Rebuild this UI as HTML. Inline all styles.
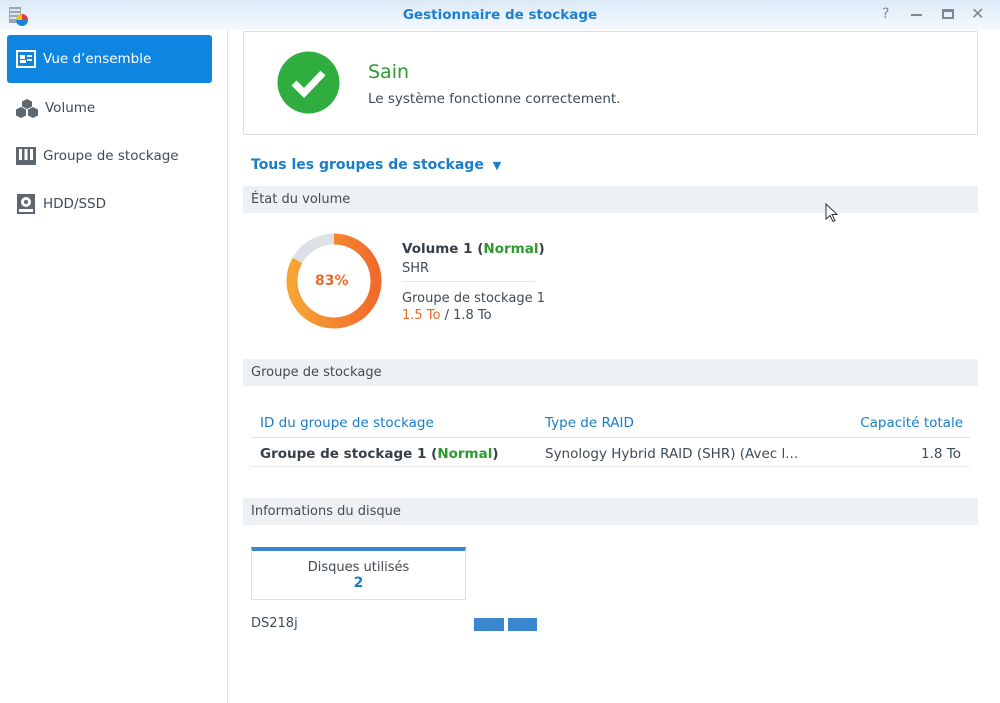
<!DOCTYPE html>
<html><head><meta charset="utf-8"><style>
*{margin:0;padding:0;box-sizing:border-box}
body{width:1000px;height:703px;background:#fff;font-family:"DejaVu Sans","Liberation Sans",sans-serif;font-size:13.5px;color:#414b55;position:relative;overflow:hidden}
.title{position:absolute;left:0;top:0;width:1000px;height:30px;background:linear-gradient(#dceaf7,#f5f9fd);}
.title .t{position:absolute;left:0;width:1000px;top:7px;text-align:center;color:#1f7fcf;font-weight:bold;font-size:13.5px}
.ctl{position:absolute;top:6px;color:#7b8894;font-size:14px}
.side{position:absolute;left:0;top:30px;width:228px;height:673px;border-right:1px solid #dde3e8}
.nav{position:absolute;left:7px;width:205px;height:48px;border-radius:3px;display:flex;align-items:center;padding-left:9px;font-size:13.5px;color:#414b55}
.nav.act{background:#0e86e1;color:#fff}
.nav svg{margin-right:7px}
.abs{position:absolute;white-space:nowrap}
.sec{position:absolute;left:243px;width:735px;height:27px;background:#eef1f4;padding:6px 8px;font-size:13px;color:#414b55}
</style></head><body>
<div class="title">
<svg class="abs" style="left:8px;top:5px" width="22" height="22" viewBox="0 0 22 22"><rect x="1" y="2" width="12" height="16" fill="#9aa7b8"/><rect x="2" y="4" width="10" height="2" fill="#dfe6ee"/><rect x="2" y="8" width="10" height="2" fill="#dfe6ee"/><rect x="2" y="12" width="10" height="2" fill="#dfe6ee"/><circle cx="14" cy="15" r="6" fill="#1e82d8"/><path d="M14 15 L14 9 A6 6 0 0 1 20 15 Z" fill="#e83d3d"/><path d="M14 15 L8 15 A6 6 0 0 1 14 9Z" fill="#f4c21d"/></svg>
<div class="t">Gestionnaire de stockage</div>
<div class="ctl" style="left:882px">?</div>
<div class="abs" style="left:911px;top:14px;width:11px;height:2px;background:#7b8894"></div>
<div class="abs" style="left:942px;top:9px;width:12px;height:10px;border:2px solid #7b8894;border-top-width:3px"></div>
<div class="ctl" style="left:971px;top:4px;font-size:16px">✕</div>
</div>
<div class="side">
<div class="nav act" style="top:5px"><svg width="20" height="18" viewBox="0 0 20 18"><rect x="1" y="1" width="18" height="16" fill="none" stroke="#fff" stroke-width="2"/><rect x="4" y="5" width="5" height="4" fill="#fff"/><rect x="4" y="10" width="6" height="3" fill="#fff"/><rect x="11" y="5" width="5" height="2" fill="#fff"/><rect x="11" y="9" width="5" height="2" fill="#fff"/></svg>Vue d’ensemble</div>
<div class="nav" style="top:54px"><svg width="22" height="20" viewBox="0 0 22 20"><path d="M11 1l5 2.5v5l-5 2.5-5-2.5v-5z M5 9l5 2.5v6L5 20 0 17.5v-6z M17 9l5 2.5v6L17 20l-5-2.5v-6z" fill="#5e6770"/></svg>Volume</div>
<div class="nav" style="top:102px"><svg width="20" height="18" viewBox="0 0 20 18"><rect x="0" y="0" width="20" height="18" fill="#5e6770"/><rect x="3" y="2" width="3" height="11" fill="#fff"/><rect x="8.5" y="2" width="3" height="11" fill="#fff"/><rect x="14" y="2" width="3" height="11" fill="#fff"/></svg>Groupe de stockage</div>
<div class="nav" style="top:150px"><svg width="20" height="20" viewBox="0 0 20 20"><rect x="1" y="0" width="18" height="20" fill="#5e6770"/><circle cx="10" cy="8" r="5" fill="#fff"/><circle cx="10" cy="8" r="2" fill="#5e6770"/><rect x="3" y="15" width="14" height="3" fill="#fff"/></svg>HDD/SSD</div>
</div>
<div class="abs" style="left:243px;top:31px;width:735px;height:104px;border:1px solid #d9dee3;border-radius:2px"></div>
<svg class="abs" style="left:277px;top:51px" width="63" height="63" viewBox="0 0 63 63"><circle cx="31.5" cy="31.5" r="31" fill="#2fae3f"/><path d="M17 32l10 10 19-20" fill="none" stroke="#fff" stroke-width="7"/></svg>
<div class="abs" style="left:368px;top:61px;font-size:19px;color:#2a9d2e">Sain</div>
<div class="abs" style="left:368px;top:91px;font-size:13.5px;color:#414b55">Le système fonctionne correctement.</div>
<div class="abs" style="left:251px;top:157px;font-size:14px;font-weight:bold;color:#1a7dc9">Tous les groupes de stockage <span style="font-size:11px;margin-left:4px">&#9660;</span></div>
<div class="sec" style="top:186px">État du volume</div>
<svg class="abs" style="left:286px;top:233px" width="96" height="96" viewBox="0 0 96 96"><defs><linearGradient id="g" x1="0" y1="0" x2="0" y2="1"><stop offset="0" stop-color="#f7a435"/><stop offset="1" stop-color="#f26a2a"/></linearGradient></defs><circle cx="48" cy="48" r="42" fill="none" stroke="#dde1e6" stroke-width="11"/><circle cx="48" cy="48" r="42" fill="none" stroke="url(#g)" stroke-width="11" stroke-dasharray="219 264" transform="rotate(-90 48 48)"/></svg>
<div class="abs" style="left:315px;top:273px;font-size:14px;font-weight:bold;color:#ea6a2c">83%</div>
<div class="abs" style="left:402px;top:241px;font-weight:bold;font-size:13.5px;color:#36404a">Volume 1 (<span style="color:#2a9d2e">Normal</span>)</div>
<div class="abs" style="left:402px;top:261px;font-size:13px">SHR</div>
<div class="abs" style="left:402px;top:281px;width:133px;height:1px;background:#e3e7ea"></div>
<div class="abs" style="left:402px;top:291px;font-size:13px">Groupe de stockage 1</div>
<div class="abs" style="left:402px;top:308px;font-size:13px"><span style="color:#ea6a2c">1.5 To</span> / 1.8 To</div>
<div class="sec" style="top:359px">Groupe de stockage</div>
<div class="abs" style="left:260px;top:415px;color:#1a7dc9">ID du groupe de stockage</div>
<div class="abs" style="left:545px;top:415px;color:#1a7dc9">Type de RAID</div>
<div class="abs" style="right:37px;top:415px;color:#1a7dc9">Capacité totale</div>
<div class="abs" style="left:251px;top:437px;width:719px;height:1px;background:#dfe3e7"></div>
<div class="abs" style="left:260px;top:446px;font-weight:bold;color:#36404a">Groupe de stockage 1 (<span style="color:#2a9d2e">Normal</span>)</div>
<div class="abs" style="left:545px;top:446px">Synology Hybrid RAID (SHR) (Avec l...</div>
<div class="abs" style="right:39px;top:446px">1.8 To</div>
<div class="abs" style="left:251px;top:466px;width:719px;height:1px;background:#e8ebee"></div>
<div class="sec" style="top:498px">Informations du disque</div>
<div class="abs" style="left:251px;top:547px;width:215px;height:53px;border:1px solid #d9dee3;border-top:4px solid #3a86cf;text-align:center;padding-top:9px;font-size:13px">Disques utilisés<div style="font-weight:bold;color:#1a7dc9;font-size:14px">2</div></div>
<div class="abs" style="left:251px;top:616px;font-size:13px">DS218j</div>
<div class="abs" style="left:474px;top:618px;width:30px;height:13px;background:#3a86cf"></div>
<div class="abs" style="left:508px;top:618px;width:29px;height:13px;background:#3a86cf"></div>
<svg class="abs" style="left:825px;top:203px" width="14" height="20" viewBox="0 0 14 20"><path d="M1 1v15l4-3.5 3 6 2-1-3-6h5z" fill="#fff" stroke="#333" stroke-width="1"/></svg>
</body></html>
